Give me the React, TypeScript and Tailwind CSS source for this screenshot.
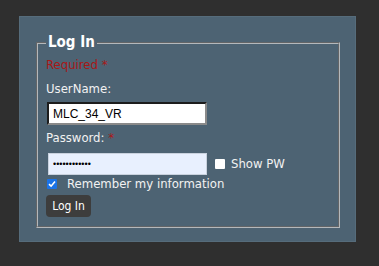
import React from "react";

const sans = "font-['DejaVu_Sans_Condensed','DejaVu_Sans',sans-serif]";

function Box({ checked }: { checked?: boolean }) {
  // drawn checkbox, matches the small square in the shot
  if (checked) {
    return (
      <span className="flex h-[10px] w-[10px] items-center justify-center rounded-[1px] bg-[#1a73e8]">
        <svg width="8" height="8" viewBox="0 0 8 8">
          <path d="M1 4.2 L3.1 6.2 L7 1.6" fill="none" stroke="white" strokeWidth="1.6" />
        </svg>
      </span>
    );
  }
  return <span className="block h-[10px] w-[10px] rounded-[1px] bg-white" />;
}

export default function App() {
  return (
    <div className={`h-[266px] w-[379px] bg-[#2f2f2f] pl-[19px] pt-[16px] ${sans}`}>
      <div className="h-[226px] w-[337px] border border-[#566c7b] bg-[#4d6373] pl-[16px] pr-[15px] pt-[16px]">
        <fieldset className="h-[195px] w-[304px] border-2 border-[#b4b8bb] px-[8px] pt-[5px] [border-style:groove]">
          <legend className="px-[2px] text-[15px] font-bold leading-[19px] text-white">Log In</legend>
          <div className="text-[13px] leading-[16px] text-[#a81818]">Required *</div>
          <div className="mt-[8px] text-[13px] leading-[16px] text-[#f2f2f2]">UserName:</div>
          <input
            readOnly
            value="MLC_34_VR"
            className="ml-[1px] mt-[5px] block h-[23px] w-[160px] border-2 border-b-[#8a8a8a] border-l-[#1c1c1c] border-r-[#8a8a8a] border-t-[#1c1c1c] bg-white px-[4px] font-['Liberation_Sans',Arial,sans-serif] text-[12px] text-black outline-none"
          />
          <div className="mt-[5px] text-[13px] leading-[16px] text-[#f2f2f2]">
            Password: <span className="text-[#a81818]">*</span>
          </div>
          <div className="mt-[7px] flex items-center">
            <input
              readOnly
              type="password"
              value="MLC34VRpass1"
              className="ml-[2px] block h-[22px] w-[159px] border border-[#c9d2de] bg-[#e8f0fe] px-[4px] font-['Liberation_Sans',Arial,sans-serif] text-[9px] text-black outline-none"
            />
            <span className="ml-[8px]">
              <Box />
            </span>
            <span className="ml-[6px] text-[13px] leading-[16px] text-[#f2f2f2]">Show PW</span>
          </div>
          <div className="mt-[1px] flex items-center">
            <span className="ml-[1px]">
              <Box checked />
            </span>
            <span className="ml-[10px] text-[13px] leading-[16px] text-[#f2f2f2]">Remember my information</span>
          </div>
          <button className="mt-[3px] h-[22px] w-[45px] rounded-[4px] bg-[#3d3d3d] text-[12px] text-white">Log In</button>
        </fieldset>
      </div>
    </div>
  );
}
